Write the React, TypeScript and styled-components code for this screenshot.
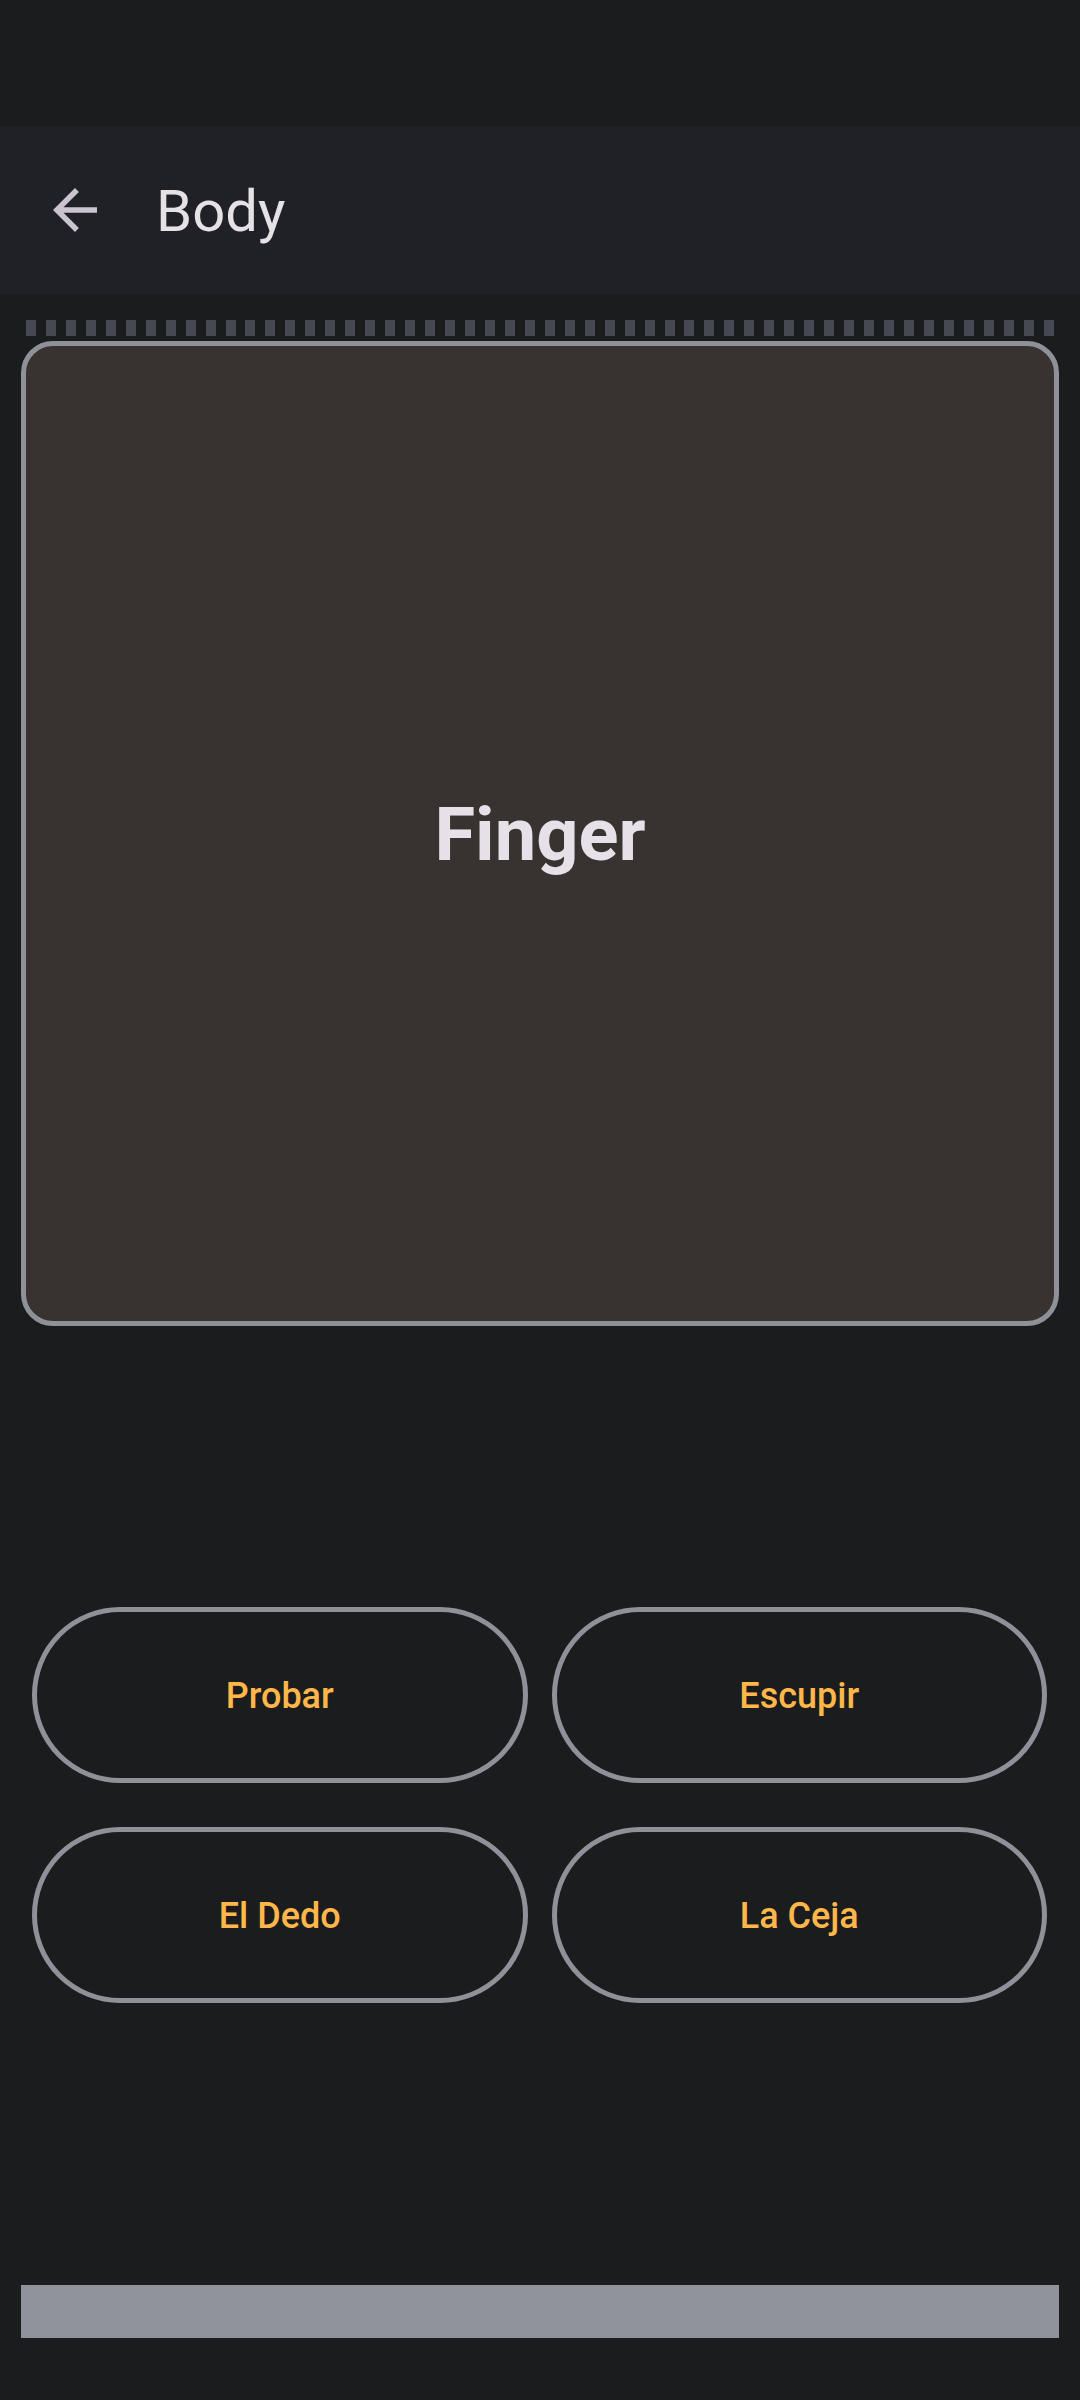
import styled, { createGlobalStyle } from "styled-components"

const GlobalStyle = createGlobalStyle`
    * {
        box-sizing: border-box;
    }
    body {
        margin: 0;
        background-color: #1b1c1e;
        font-family: Roboto, "Noto Sans", sans-serif;
    }
`

const answers = ["Probar", "Escupir", "El Dedo", "La Ceja"]
const DASH_COUNT = 52

const App = () => {
    return (
        <>
            <GlobalStyle />
            <StyledPage>
                <StatusBar />
                <AppBar>
                    <BackButton aria-label="back">
                        <svg width="66" height="66" viewBox="0 0 24 24">
                            <path
                                fill="#cac4d0"
                                d="M20 11H7.83l5.59-5.59L12 4l-8 8 8 8 1.41-1.41L7.83 13H20v-2z"
                            />
                        </svg>
                    </BackButton>
                    <Title>Body</Title>
                </AppBar>

                <Progress>
                    {Array.from({ length: DASH_COUNT }).map((_, i) => (
                        <Dash key={i} />
                    ))}
                </Progress>

                <Card>
                    <Word>Finger</Word>
                </Card>

                <Answers>
                    {answers.map((a) => (
                        <AnswerButton key={a}>{a}</AnswerButton>
                    ))}
                </Answers>

                <BottomBar />
            </StyledPage>
        </>
    )
}

const StyledPage = styled.div`
    min-height: 2400px;
    display: flex;
    flex-direction: column;
    background-color: #1b1c1e;
`

const StatusBar = styled.div`
    height: 126px;
`

const AppBar = styled.header`
    height: 168px;
    display: flex;
    align-items: center;
    gap: 48px;
    padding-left: 42px;
    background-color: #202127;
`

const BackButton = styled.div`
    width: 66px;
    height: 66px;
    display: flex;
    align-items: center;
    justify-content: center;
`

const Title = styled.h1`
    margin: 0;
    padding-top: 2px;
    font-size: 58px;
    font-weight: 400;
    color: #e6e1e5;
    line-height: 1;
`

const Progress = styled.div`
    margin: 26px 26px 0;
    height: 16px;
    display: flex;
    justify-content: space-between;
`

const Dash = styled.span`
    width: 10px;
    height: 16px;
    background-color: #464852;
`

const Card = styled.section`
    margin: 5px 21px 0;
    height: 985px;
    border: 5px solid #8f9199;
    border-radius: 32px;
    background-color: #383331;
    display: flex;
    align-items: center;
    justify-content: center;
`

const Word = styled.div`
    font-size: 74px;
    font-weight: 700;
    color: #e6e1e8;
    padding-top: 2px;
`

const Answers = styled.div`
    margin-top: 281px;
    padding: 0 33px 0 32px;
    display: grid;
    grid-template-columns: 1fr 1fr;
    column-gap: 24px;
    row-gap: 44px;
`

const AnswerButton = styled.button`
    height: 176px;
    border: 5px solid #8f9199;
    border-radius: 88px;
    background-color: transparent;
    color: #ffb74a;
    font-family: Roboto, "Noto Sans", sans-serif;
    font-size: 36px;
    font-weight: 500;
    padding-top: 3px;
    cursor: pointer;
`

const BottomBar = styled.div`
    margin: 282px 21px 0;
    height: 53px;
    background-color: #90939b;
`

export default App
